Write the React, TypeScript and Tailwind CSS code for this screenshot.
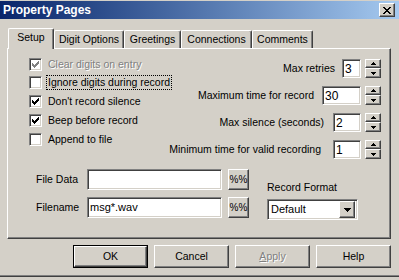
import React from "react";

const raised =
  "border border-t-white border-l-white border-r-[#404040] border-b-[#404040] shadow-[inset_-1px_-1px_0_#808080] bg-[#d4d0c8]";
const sunken =
  "border border-t-[#808080] border-l-[#808080] border-r-white border-b-white shadow-[inset_1px_1px_0_#404040,inset_-1px_-1px_0_#d4d0c8] bg-white";

function CheckMark({ color }: { color: string }) {
  return (
    <svg width="7" height="7" viewBox="0 0 7 7" shapeRendering="crispEdges" fill={color}>
      <path d="M6 0h1v3h-1zM5 1h1v3h-1zM4 2h1v3h-1zM0 2h1v3h-1zM1 3h1v3h-1zM2 4h1v3h-1zM3 3h1v3h-1z" />
    </svg>
  );
}

function Check({ label, checked, disabled, focused }: { label: string; checked?: boolean; disabled?: boolean; focused?: boolean }) {
  return (
    <div className="flex items-center h-full">
      <div className={`w-[13px] h-[13px] shrink-0 flex items-center justify-center ${sunken} ${disabled ? "bg-[#d4d0c8]" : ""}`}>
        {checked && <CheckMark color={disabled ? "#808080" : "#000"} />}
      </div>
      <span
        className={`ml-[5px] px-[1px] leading-[13px] ${focused ? "outline outline-1 outline-dotted outline-black" : ""} ${
          disabled ? "text-[#808080] [text-shadow:1px_1px_0_#fff]" : ""
        }`}
      >
        {label}
      </span>
    </div>
  );
}

function Spinner() {
  return (
    <div className="flex flex-col w-[16px] h-[19px]">
      <div className={`h-[9px] flex items-center justify-center ${raised}`}>
        <svg width="5" height="3" viewBox="0 0 5 3" shapeRendering="crispEdges">
          <path d="M2 0h1v1h1v1h1v1h-5v-1h1v-1h1z" fill="#000" />
        </svg>
      </div>
      <div className={`h-[10px] flex items-center justify-center ${raised}`}>
        <svg width="5" height="3" viewBox="0 0 5 3" shapeRendering="crispEdges">
          <path d="M0 0h5v1h-1v1h-1v1h-1v-1h-1v-1h-1z" fill="#000" />
        </svg>
      </div>
    </div>
  );
}

function NumRow({ label, value, width, gap }: { label: string; value: string; width: string; gap: string }) {
  return (
    <div className="flex items-center justify-end h-[19px]">
      <span>{label}</span>
      <div className={`${gap} ${width} shrink-0 h-[19px] ${sunken} pl-[2px] flex items-center text-[12px]`}>{value}</div>
      <div className="ml-[4px] shrink-0">
        <Spinner />
      </div>
    </div>
  );
}

const tabs = [
  { name: "Setup", w: "w-[46px]" },
  { name: "Digit Options", w: "w-[70px]" },
  { name: "Greetings", w: "w-[57px]" },
  { name: "Connections", w: "w-[71px]" },
  { name: "Comments", w: "w-[61px]" },
];

export default function App() {
  return (
    <div className="w-[399px] h-[280px] bg-[#d4d0c8] overflow-hidden whitespace-nowrap flex flex-col font-['Liberation_Sans',Arial,sans-serif] text-[10.5px] text-black border-t border-t-[#d4d0c8]">
      {/* title bar */}
      <div className="h-[18px] shrink-0 flex items-center justify-between bg-gradient-to-r from-[#0a246a] to-[#a6caf0] pl-[3px] pr-[4px]">
        <span className="text-white font-bold text-[12px] leading-none">Property Pages</span>
        <div className={`w-[16px] h-[14px] flex items-center justify-center ${raised}`}>
          <svg width="8" height="7" viewBox="0 0 8 7" shapeRendering="crispEdges" fill="#000">
            <path d="M0 0h2v1h-2zM6 0h2v1h-2zM1 1h2v1h-2zM5 1h2v1h-2zM2 2h4v1h-4zM3 3h2v1h-2zM2 4h4v1h-4zM1 5h2v1h-2zM5 5h2v1h-2zM0 6h2v1h-2zM6 6h2v1h-2z" />
          </svg>
        </div>
      </div>

      {/* tabs */}
      <div className="flex items-end ml-[8px] mt-[9px] h-[20px] shrink-0">
        {tabs.map((t, i) =>
          i === 0 ? (
            <div
              key={t.name}
              className={`${t.w} h-[21px] -mb-px relative z-10 bg-[#d4d0c8] border-t border-l border-t-white border-l-white border-r border-r-[#404040] shadow-[inset_-1px_0_0_#808080] rounded-tl-[2px] rounded-tr-[2px] flex items-center justify-center pb-[2px]`}
            >
              {t.name}
            </div>
          ) : (
            <div
              key={t.name}
              className={`${t.w} h-[18px] border-t border-l border-t-white border-l-white border-r border-r-[#404040] shadow-[inset_-1px_0_0_#808080] rounded-tl-[2px] rounded-tr-[2px] flex items-center justify-center`}
            >
              {t.name}
            </div>
          )
        )}
      </div>

      {/* panel */}
      <div className="ml-[7px] w-[384px] h-[191px] shrink-0 border border-t-white border-l-white border-r-[#404040] border-b-[#404040] shadow-[inset_-1px_-1px_0_#808080] flex flex-col">
        <div className="flex items-start pt-[6px]">
          <div className="flex flex-col pl-[21px] w-[150px] shrink-0">
            <div className="h-[18px]">
              <Check label="Clear digits on entry" checked disabled />
            </div>
            <div className="h-[19px]">
              <Check label="Ignore digits during record" focused />
            </div>
            <div className="h-[19px]">
              <Check label="Don't record silence" checked />
            </div>
            <div className="h-[19px]">
              <Check label="Beep before record" checked />
            </div>
            <div className="h-[19px]">
              <Check label="Append to file" />
            </div>
          </div>
          <div className="flex flex-col flex-1 min-w-0 gap-[8px] mt-[4px] pr-[9px]">
            <NumRow label="Max retries" value="3" width="w-[19px]" gap="ml-[7px]" />
            <NumRow label="Maximum time for record" value="30" width="w-[39px]" gap="ml-[8px]" />
            <NumRow label="Max silence (seconds)" value="2" width="w-[28px]" gap="ml-[9px]" />
            <NumRow label="Minimum time for valid recording" value="1" width="w-[28px]" gap="ml-[12px]" />
          </div>
        </div>

        <div className="flex mt-[10px] pl-[28px]">
          <div className="flex flex-col gap-[7px]">
            <div className="flex items-center h-[21px]">
              <span className="w-[51px]">File Data</span>
              <div className={`w-[135px] h-[21px] ${sunken}`} />
              <div className={`ml-[6px] w-[21px] h-[21px] flex items-center justify-center text-[10px] ${raised}`}>%%</div>
            </div>
            <div className="flex items-center h-[21px]">
              <span className="w-[51px]">Filename</span>
              <div className={`w-[135px] h-[21px] ${sunken} pl-[2px] flex items-center text-[11px]`}>msg*.wav</div>
              <div className={`ml-[6px] w-[21px] h-[21px] flex items-center justify-center text-[10px] ${raised}`}>%%</div>
            </div>
          </div>
          <div className="flex flex-col ml-[18px]">
            <span className="mt-[12px] h-[13px] leading-[13px]">Record Format</span>
            <div className={`mt-[5px] w-[91px] h-[21px] ${sunken} flex items-center justify-between pl-[3px] pr-[2px]`}>
              <span className="text-[11px]">Default</span>
              <div className={`w-[16px] h-[17px] flex items-center justify-center ${raised}`}>
                <svg width="7" height="4" viewBox="0 0 7 4" shapeRendering="crispEdges">
                  <path d="M0 0h7v1h-1v1h-1v1h-1v1h-1v-1h-1v-1h-1v-1h-1z" fill="#000" />
                </svg>
              </div>
            </div>
          </div>
        </div>
      </div>

      {/* buttons */}
      <div className="flex justify-end gap-[6px] pr-[8px] mt-[6px] shrink-0">
        <div className="w-[75px] h-[23px] border border-black">
          <div className={`w-full h-full flex items-center justify-center ${raised}`}>OK</div>
        </div>
        <div className={`w-[75px] h-[23px] flex items-center justify-center ${raised}`}>Cancel</div>
        <div className={`w-[75px] h-[23px] flex items-center justify-center text-[#808080] [text-shadow:1px_1px_0_#fff] ${raised}`}>
          <span>
            <span className="underline">A</span>pply
          </span>
        </div>
        <div className={`w-[75px] h-[23px] flex items-center justify-center ${raised}`}>Help</div>
      </div>

      <div className="mt-[7px] h-[1px] shrink-0 bg-[#808080]" />
      <div className="h-[1px] shrink-0 bg-[#404040]" />
    </div>
  );
}
